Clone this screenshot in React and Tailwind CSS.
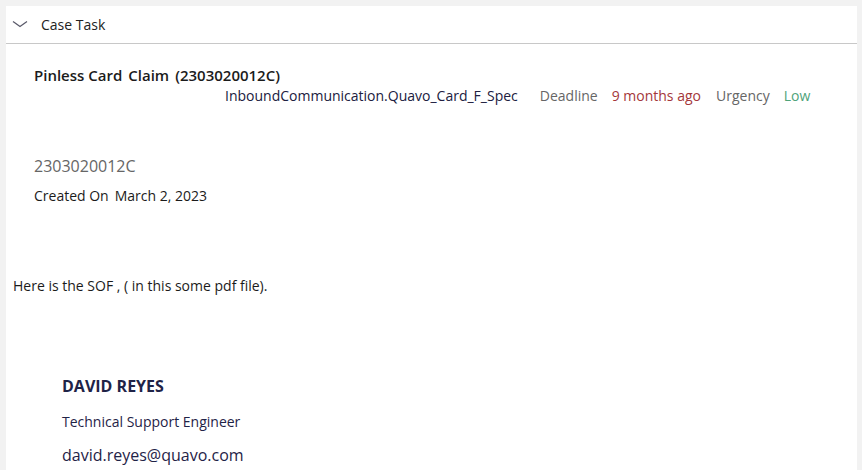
import React from "react";

export default function App() {
  return (
    <div
      className="min-h-[470px] h-[470px] overflow-hidden bg-[#f2f2f2] pt-[6px] pl-[6px]"
      style={{ fontFamily: '"Open Sans", "Noto Sans", sans-serif' }}
    >
      <div className="w-[851px] h-[464px] bg-white">
        <div className="h-[38px] border-b border-[#c8c8c8] flex items-center">
          <svg width="16" height="10" viewBox="0 0 16 10" className="ml-[6px] -mt-[1px]">
            <path d="M1 2.5 L8 7.5 L15 2.5" fill="none" stroke="#5a5a6a" strokeWidth="1.3" />
          </svg>
          <span className="ml-[13px] -mt-[1px] text-[14px] text-[#222]">Case Task</span>
        </div>
        <div className="pt-[21px]">
          <div className="pl-[28px] text-[15px] leading-[20px] font-semibold text-[#1b1b1b] flex gap-[6px]">
            <span>Pinless Card</span>
            <span>Claim</span>
            <span>(2303020012C)</span>
          </div>
          <div className="pl-[219px] text-[14px] leading-[20px] flex mt-[1px]">
            <span className="text-[#202040]">InboundCommunication.Quavo_Card_F_Spec</span>
            <span className="ml-[22px] text-[#666]">Deadline</span>
            <span className="ml-[14px] text-[#a4373a]">9 months ago</span>
            <span className="ml-[15px] text-[#666]">Urgency</span>
            <span className="ml-[14px] text-[#4fa37a]">Low</span>
          </div>
          <div className="pl-[28px] mt-[48px] text-[16px] leading-[24px] text-[#666]">2303020012C</div>
          <div className="pl-[28px] mt-[8px] text-[14px] leading-[20px] text-[#1b1b1b] flex gap-[6px]">
            <span>Created On</span>
            <span>March 2, 2023</span>
          </div>
          <div className="pl-[7px] mt-[70px] text-[14px] leading-[20px] text-[#1b1b1b]">
            Here is the SOF , ( in this some pdf file).
          </div>
          <div className="pl-[56px] mt-[79px]">
            <div className="text-[16px] leading-[22px] font-bold text-[#1f2347]">DAVID REYES</div>
            <div className="mt-[15px] text-[14px] leading-[20px] text-[#1f2347]">Technical Support Engineer</div>
            <div className="mt-[11px] text-[16px] leading-[24px] text-[#1f2347]">david.reyes@quavo.com</div>
          </div>
        </div>
      </div>
    </div>
  );
}
